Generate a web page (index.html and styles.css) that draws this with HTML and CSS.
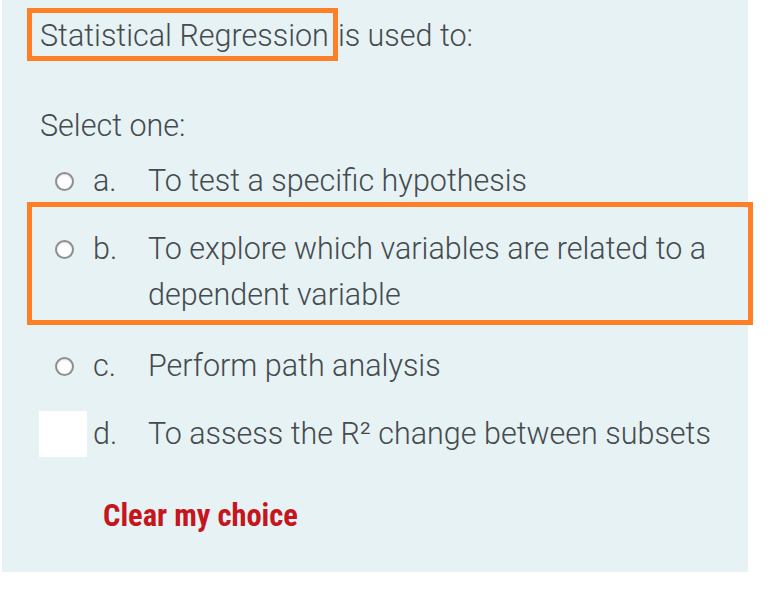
FILE: index.html
```html
<!DOCTYPE html>
<html>
<head>
<meta charset="utf-8">
<link rel="stylesheet" href="styles.css">
</head>
<body>
<div class="panel">
  <div class="qtext"><span class="hl">Statistical Regression</span>is used to:</div>
  <div class="prompt">Select one:</div>
  <div class="answers">
    <div class="opt opt-a">
      <span class="mark"><span class="radio"></span></span>
      <span class="letter">a.</span>
      <span class="label">To test a specific hypothesis</span>
    </div>
    <div class="opt opt-b">
      <span class="mark"><span class="radio"></span></span>
      <span class="letter">b.</span>
      <span class="label">To explore which variables are related to a dependent variable</span>
    </div>
    <div class="opt opt-c">
      <span class="mark"><span class="radio"></span></span>
      <span class="letter">c.</span>
      <span class="label">Perform path analysis</span>
    </div>
    <div class="opt opt-d">
      <span class="mark"><span class="blank"></span></span>
      <span class="letter">d.</span>
      <span class="label">To assess the R² change between subsets</span>
    </div>
  </div>
  <div class="clear"><a class="clear-link">Clear my choice</a></div>
</div>
</body>
</html>
```
FILE: styles.css
```css
html, body {
  margin: 0;
  padding: 0;
  background: #ffffff;
}
body {
  font-family: Roboto, "Liberation Sans", sans-serif;
  font-weight: 300;
  font-size: 30.5px;
  color: #454a4d;
}
.panel {
  width: 746px;
  height: 572px;
  margin-left: 2px;
  background: #e6f2f4;
  box-sizing: border-box;
  padding-top: 8px;
}
.qtext {
  padding-left: 25px;
  line-height: 33px;
}
.hl {
  display: inline-block;
  border: 5px solid #ff7f27;
  padding: 6px 4px 4px 8px;
}
.prompt {
  margin-top: 48px;
  padding-left: 38px;
  line-height: 33px;
}
.answers {
  display: flex;
  flex-direction: column;
  margin-top: 5px;
}
.opt {
  display: flex;
  align-items: flex-start;
  line-height: 46px;
  padding: 11px 0;
}
.mark {
  width: 50px;
  height: 46px;
  margin-left: 37px;
  display: flex;
  align-items: center;
  justify-content: center;
  flex: none;
}
.radio {
  width: 15px;
  height: 15px;
  border-radius: 50%;
  border: 2px solid #8f8f8f;
  background: #ffffff;
  box-shadow: inset 0 1px 2px rgba(0,0,0,0.12);
}
.blank {
  width: 48px;
  height: 46px;
  background: #ffffff;
  margin-left: -2px;
}
.letter {
  width: 55px;
  flex: none;
  padding-left: 4px;
}
.label {
  flex: 1;
  padding-right: 24px;
}
.opt-b {
  border: 5px solid #ff7f27;
  margin: -13px -5px 7px 25px;
  padding: 19px 0 0 0;
  height: 94px;
}
.opt-b .mark {
  margin-left: 7px;
}
.clear {
  padding-left: 101px;
  margin-top: 30px;
}
.clear-link {
  font-family: "Liberation Sans Narrow", "Roboto Condensed", Roboto, sans-serif;
  font-weight: 700;
  font-size: 30.5px;
  color: #c4161c;
}
```
